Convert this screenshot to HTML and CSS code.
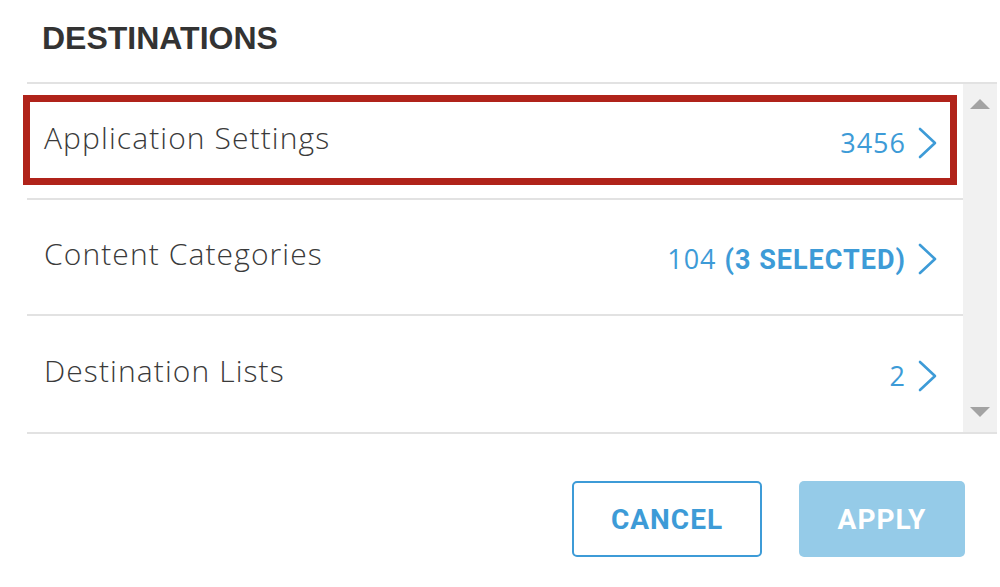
FILE: index.html
```html
<!DOCTYPE html>
<html>
<head>
<meta charset="utf-8">
<link rel="stylesheet" href="styles.css">
</head>
<body>
<div class="panel">
  <h2 class="title">DESTINATIONS</h2>
  <div class="list">
    <div class="rows">
      <div class="row">
        <span class="label">Application Settings</span>
        <span class="value">3456</span>
        <svg class="chev" width="19" height="32" viewBox="0 0 19 32"><polyline points="2,2 17,16 2,30" fill="none" stroke="#3d9bd7" stroke-width="2.6" stroke-linecap="round" stroke-linejoin="round"/></svg>
        <div class="highlight"></div>
      </div>
      <div class="row">
        <span class="label">Content Categories</span>
        <span class="value">104 <b>(3 SELECTED)</b></span>
        <svg class="chev" width="19" height="32" viewBox="0 0 19 32"><polyline points="2,2 17,16 2,30" fill="none" stroke="#3d9bd7" stroke-width="2.6" stroke-linecap="round" stroke-linejoin="round"/></svg>
      </div>
      <div class="row">
        <span class="label">Destination Lists</span>
        <span class="value">2</span>
        <svg class="chev" width="19" height="32" viewBox="0 0 19 32"><polyline points="2,2 17,16 2,30" fill="none" stroke="#3d9bd7" stroke-width="2.6" stroke-linecap="round" stroke-linejoin="round"/></svg>
      </div>
    </div>
    <div class="scrollbar">
      <span class="arrow up"></span>
      <span class="arrow down"></span>
    </div>
  </div>
  <div class="actions">
    <button class="btn cancel">CANCEL</button>
    <button class="btn apply">APPLY</button>
  </div>
</div>
</body>
</html>
```

FILE: styles.css
```css
html, body {
  margin: 0;
  padding: 0;
  background: #ffffff;
}
.panel {
  margin-left: 27px;
  width: 970px;
}
.title {
  margin: 0;
  height: 82px;
  box-sizing: border-box;
  padding: 20px 0 0 15px;
  font-family: "Liberation Sans", Arial, sans-serif;
  font-weight: bold;
  font-size: 32px;
  line-height: 36px;
  color: #333333;
}
.list {
  display: flex;
  border-top: 2px solid #e2e2e2;
  border-bottom: 2px solid #e2e2e2;
}
.rows {
  flex: 1;
}
.row {
  position: relative;
  display: flex;
  align-items: center;
  height: 116px;
  box-sizing: border-box;
  padding: 0 26px 0 17px;
  border-bottom: 2px solid #e2e2e2;
}
.row:last-child {
  border-bottom: none;
}
.label {
  flex: 1;
  font-family: "Open Sans", sans-serif;
  font-weight: 300;
  font-size: 30px;
  letter-spacing: 1.1px;
  color: #3a3a3a;
  margin-top: -8px;
}
.value {
  font-family: "Open Sans", sans-serif;
  font-size: 27px;
  letter-spacing: 1px;
  color: #3d9bd7;
  margin-right: 12px;
  margin-top: 2px;
}
.value b {
  font-family: "Roboto", "Liberation Sans", sans-serif;
  font-weight: bold;
  letter-spacing: 1px;
}
.chev {
  display: block;
  margin-top: 4px;
}
.highlight {
  position: absolute;
  left: -4px;
  top: 11px;
  width: 934px;
  height: 90px;
  box-sizing: border-box;
  border: 7px solid #b0231a;
}
.scrollbar {
  width: 34px;
  background: #f1f1f1;
  display: flex;
  flex-direction: column;
  justify-content: space-between;
  align-items: center;
  padding: 15px 0 15px;
}
.arrow {
  width: 0;
  height: 0;
  border-left: 10px solid transparent;
  border-right: 10px solid transparent;
}
.arrow.up {
  border-bottom: 10px solid #a3a3a3;
}
.arrow.down {
  border-top: 10px solid #a3a3a3;
}
.actions {
  display: flex;
  justify-content: flex-end;
  gap: 37px;
  padding: 47px 32px 0 0;
}
.btn {
  height: 76px;
  border-radius: 5px;
  font-family: "Roboto", "Liberation Sans", sans-serif;
  font-weight: bold;
  font-size: 28px;
  letter-spacing: 1px;
  padding: 0;
}
.cancel {
  width: 190px;
  background: #ffffff;
  border: 2px solid #3d9bd7;
  color: #3d9bd7;
}
.apply {
  width: 166px;
  background: #95cbe8;
  border: none;
  color: #ffffff;
}
```
